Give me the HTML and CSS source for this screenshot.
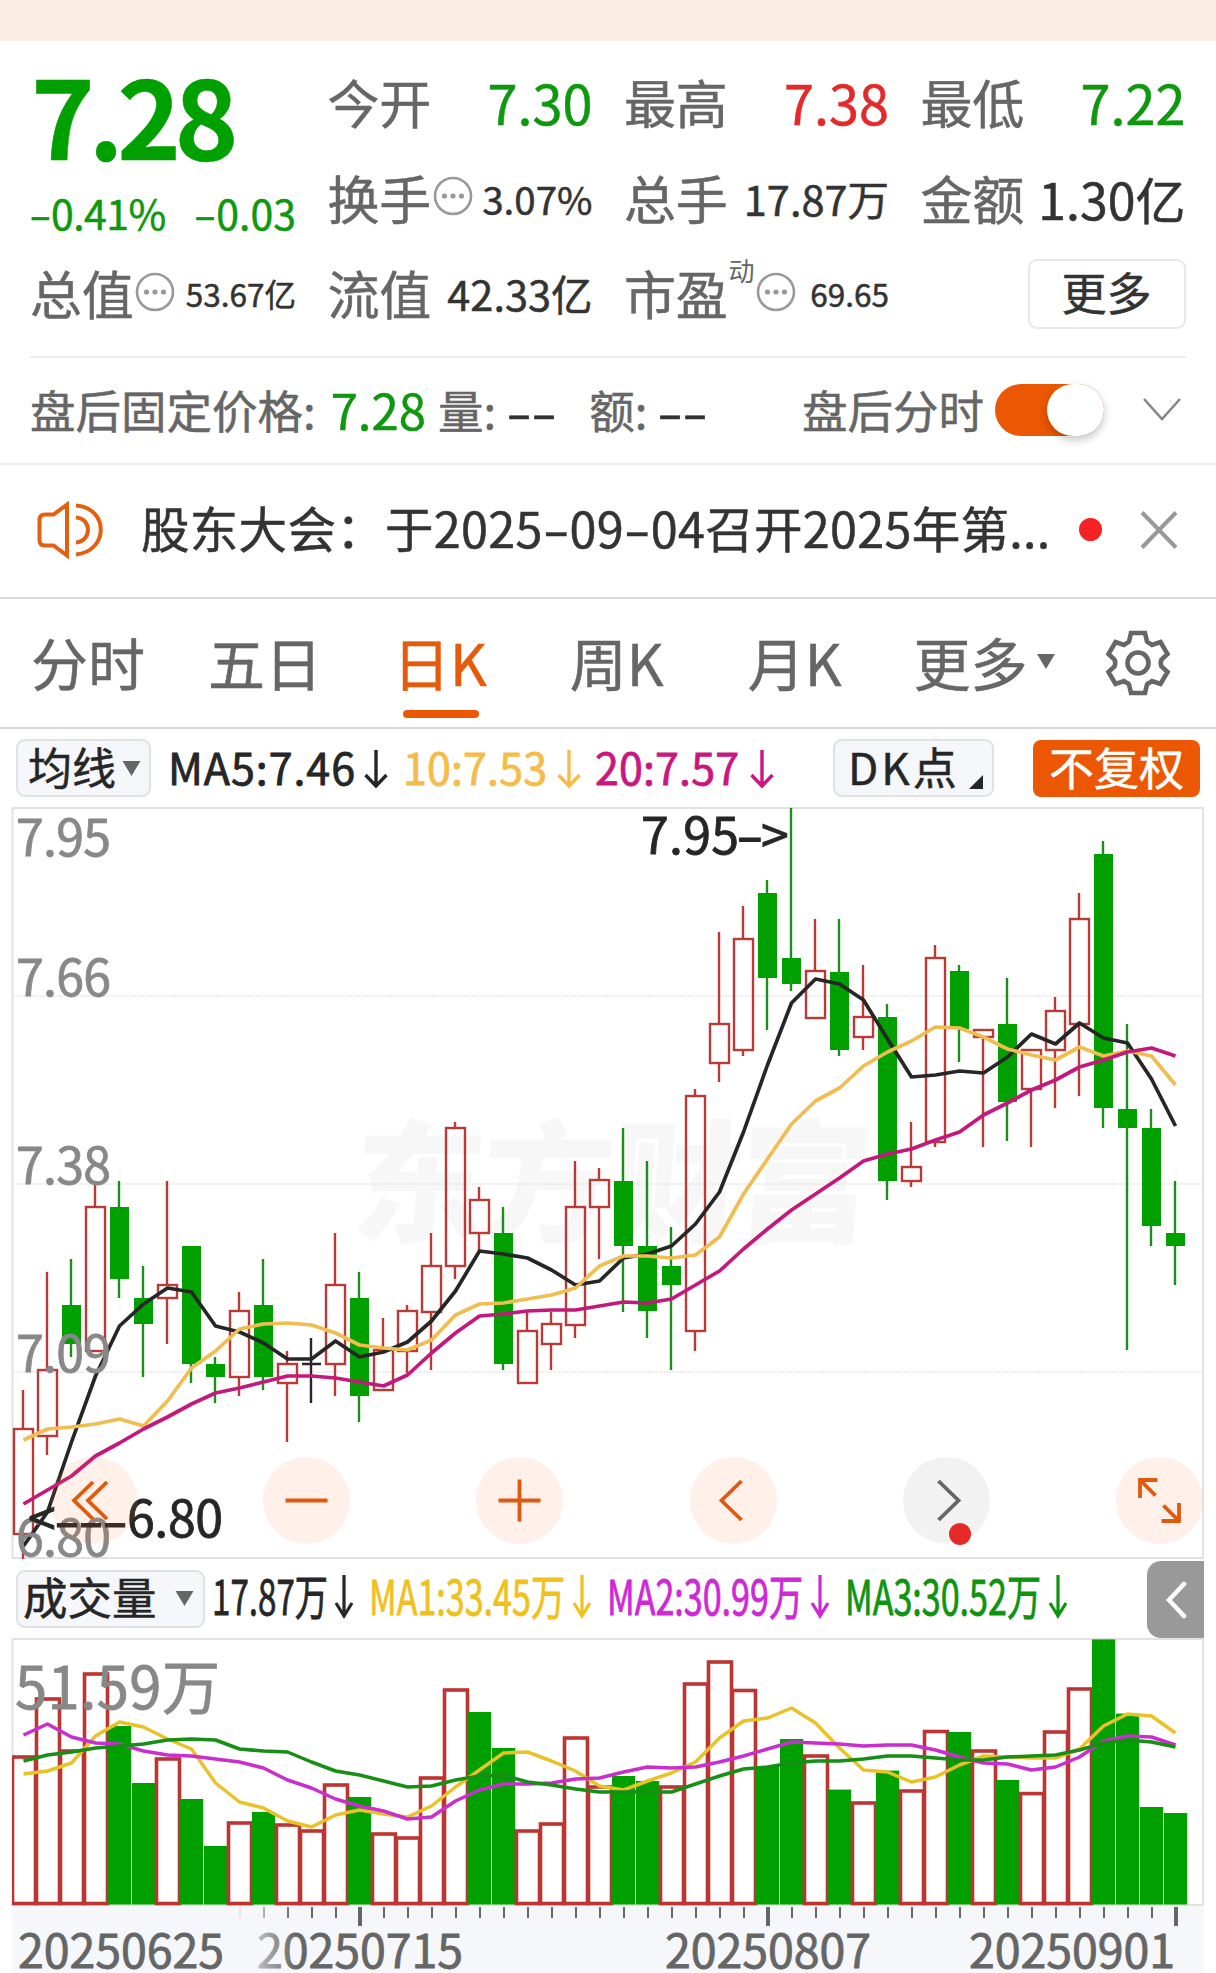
FILE: index.html
```html
<!DOCTYPE html>
<html lang="zh-CN">
<head>
<meta charset="utf-8">
<title>日K</title>
<link rel="stylesheet" href="styles.css">
</head>
<body>
<svg class="defs" width="0" height="0">
  <symbol id="dots" viewBox="0 0 40 40"><circle cx="20" cy="20" r="18" fill="none" stroke="#999" stroke-width="2.6"/><g fill="#999"><circle cx="11.5" cy="20" r="2.6"/><circle cx="20" cy="20" r="2.6"/><circle cx="28.5" cy="20" r="2.6"/></g></symbol>
  <symbol id="down" viewBox="0 0 24 40"><path d="M12 1V37M1.500 26L12 37L22.500 26" fill="none" stroke="currentColor" stroke-width="3.400"/></symbol>
</svg>
<div class="strip"></div>
<section class="quote">
  <div class="price green"><b>7.28</b><div class="chg"><span><i class="h">-</i>0.41%</span><span><i class="h">-</i>0.03</span></div></div>
  <div class="stat"><label>今开</label><span class="v54 green">7.30</span></div>
  <div class="stat"><label>最高</label><span class="v54 red">7.38</span></div>
  <div class="stat"><label>最低</label><span class="v54 green">7.22</span></div>
  <div class="stat"><label>换手</label><svg class="dots"><use href="#dots"/></svg><span class="v40">3.07%</span></div>
  <div class="stat"><label>总手</label><span class="v42">17.87万</span></div>
  <div class="stat"><label>金额</label><span class="v51">1.30亿</span></div>
  <div class="stat"><label>总值</label><svg class="dots"><use href="#dots"/></svg><span class="v32">53.67亿</span></div>
  <div class="stat"><label>流值</label><span class="v42">42.33亿</span></div>
  <div class="stat"><label>市盈</label><sup>动</sup><svg class="dots"><use href="#dots"/></svg><span class="v32">69.65</span></div>
  <div class="stat end"><button class="more">更多</button></div>
</section>
<section class="after">
  <span>盘后固定价格:</span><span class="fixed green">7.28</span><span>量:</span><span class="none"><i class="h">-</i><i class="h">-</i></span><span class="amt">额:</span><span class="none"><i class="h">-</i><i class="h">-</i></span>
  <span class="right">盘后分时</span><span class="toggle"></span>
  <svg class="chev" width="40" height="26" viewBox="0 0 40 26"><path d="M2 2L20 22L38 2" fill="none" stroke="#85878c" stroke-width="2.600"/></svg>
</section>
<section class="notice">
  <svg width="66" height="58" viewBox="0 0 66 58" fill="none" stroke="#e2600f" stroke-width="4"><path d="M30 3.500L16.500 13.500H8Q2.500 13.500 2.500 19V39Q2.500 44.500 8 44.500H16.500L30 54.500Z"/><path d="M39 4.500C72 7 72 50 39 53.500M39 16.500C55 17.500 55 40 39 41.500"/></svg>
  <p>股东大会：于2025<i class="h">-</i>09<i class="h">-</i>04召开2025年第...</p>
  <span class="dot"></span>
  <svg width="40" height="40" viewBox="0 0 40 40"><path d="M3 2.500L37 37.500M37 2.500L3 37.500" stroke="#999" stroke-width="4"/></svg>
</section>
<nav class="tabs">
  <a>分时</a><a>五日</a><a class="on">日K</a><a>周K</a><a>月K</a><a>更多<svg class="tri" width="18" height="15" viewBox="0 0 18 15"><path d="M0 0H18L9 15Z" fill="#666"/></svg></a>
  <svg class="gear" width="68" height="68" viewBox="-34 -34 68 68" fill="none" stroke="#666" stroke-width="4.600"><path d="M-7-30H7L9-21.500Q10-20 12-19.500L14-18L22.500-21L29.500-9L23.500-3.500Q22 0 23.500 3.500L29.500 9L22.500 21L14 18L12 19.500Q10 20 9 21.500L7 30H-7L-9 21.500Q-10 20-12 19.500L-14 18L-22.500 21L-29.500 9L-23.500 3.500Q-22 0-23.500-3.500L-29.500-9L-22.500-21L-14-18L-12-19.500Q-10-20-9-21.500Z"/><circle r="10.500"/></svg>
</nav>
<div class="mabar">
  <button class="pick"><span>均线</span><svg class="tri" width="19" height="15" viewBox="0 0 18 15"><path d="M0 0H18L9 15Z" fill="#666"/></svg></button>
  <svg class="legend" width="664" height="58" viewBox="169 738 664 58">
    <g font-size="43"><text x="168" y="784" fill="#262626" textLength="187">MA5:7.46</text><text x="403" y="784" fill="#f5bc4b" textLength="144">10:7.53</text><text x="595" y="784" fill="#c8187f" textLength="144">20:7.57</text></g>
    <use href="#down" x="364" y="748" width="24" height="40" color="#262626"/><use href="#down" x="557" y="748" width="24" height="40" color="#f5bc4b"/><use href="#down" x="750" y="748" width="24" height="40" color="#c8187f"/>
  </svg>
  <button class="pick dk"><span>DK点</span><svg width="14" height="14" viewBox="0 0 14 14"><path d="M14 0V14H0Z" fill="#262626"/></svg></button>
  <button class="adj"><span>不复权</span></button>
</div>
<svg id="kline" class="plot" width="1216" height="752" viewBox="0 807 1216 752"></svg>
<div class="volbar">
  <button class="pick vol"><span>成交量</span><svg class="tri" width="19" height="15" viewBox="0 0 18 15"><path d="M0 0H18L9 15Z" fill="#666"/></svg></button>
  <svg class="legend" width="942" height="60" viewBox="205 1570 942 60">
    <g font-size="48">
      <text x="212" y="1616" fill="#262626" textLength="116" lengthAdjust="spacingAndGlyphs">17.87万</text>
      <text x="369" y="1616" fill="#f0c11c" textLength="196" lengthAdjust="spacingAndGlyphs">MA1:33.45万</text>
      <text x="607" y="1616" fill="#cf28d6" textLength="196" lengthAdjust="spacingAndGlyphs">MA2:30.99万</text>
      <text x="845" y="1616" fill="#0f940f" textLength="196" lengthAdjust="spacingAndGlyphs">MA3:30.52万</text>
    </g>
    <g fill="none" stroke-width="3.200"><path d="M344 1576V1616M336 1604L344 1617L352 1604" stroke="#262626"/><path d="M582 1576V1616M574 1604L582 1617L590 1604" stroke="#f0c11c"/><path d="M820 1576V1616M812 1604L820 1617L828 1604" stroke="#cf28d6"/><path d="M1058 1576V1616M1050 1604L1058 1617L1066 1604" stroke="#0f940f"/></g>
  </svg>
  <span class="fold"><svg width="22" height="38" viewBox="0 0 22 38"><path d="M19 3L4 19L19 35" fill="none" stroke="#fff" stroke-width="4.500" stroke-linecap="round"/></svg></span>
</div>
<svg id="volume" class="plot" width="1216" height="335" viewBox="0 1638 1216 335"></svg>
<script src="chart.js"></script>
</body>
</html>
```
FILE: styles.css
```css
* { box-sizing: border-box; }
body { margin: 0; width: 1216px; height: 1973px; overflow: hidden; background: #fff; color: #333; font-family: "Noto Sans CJK SC", "Noto Sans", sans-serif; font-weight: 400; line-height: 1; -webkit-text-stroke: .5px currentColor; }
svg { display: block; flex: none; }
.defs { position: absolute; }
button { font: inherit; color: inherit; padding: 0; -webkit-text-stroke: inherit; }
button span { padding-bottom: 4px; }
text { font-family: "Noto Sans CJK SC", "Noto Sans", sans-serif; -webkit-text-stroke: 0; stroke-width: .8px; }
.legend, .plot { overflow: visible; }
.green { color: #0d980d; }
.red { color: #e32a2a; }
.h { font-style: normal; display: inline-block; transform: scaleX(1.6); margin: 0 .1em; }
.strip { height: 41px; background: #fcede3; }

.quote { height: 315px; padding: 14px 30px 0 30px; display: grid; grid-template-columns: 266px 264px 264px 264px; column-gap: 32.500px; grid-template-rows: repeat(3, 95.500px); }
.price { grid-row: span 2; display: flex; flex-direction: column; white-space: nowrap; }
.price b { font-size: 108px; font-weight: 700; color: #00a000; letter-spacing: -6.300px; line-height: 116px; margin-left: 1px; height: 129px; }
.chg { display: flex; justify-content: space-between; font-size: 41px; line-height: 56px; margin-left: -1px; }
.chg span:first-child { letter-spacing: -.5px; }
.stat { display: flex; align-items: center; white-space: nowrap; }
.stat label { font-size: 52px; color: #666; letter-spacing: -.3px; padding-bottom: 1px; margin-left: -1px; }
.stat:nth-child(8) label { margin-left: 0; }
.stat span { margin-left: auto; }
.stat .green, .stat .red { padding-bottom: 2px; }
.stat.end { justify-content: flex-end; }
.stat sup { font-size: 26px; color: #666; align-self: flex-start; margin-top: 11px; margin-left: 1px; -webkit-text-stroke: 0; }
.dots { width: 40px; height: 40px; margin: -4px 0 0 2px; }
sup + .dots { margin-left: 2px; }
.v54 { font-size: 54px; }
.v51 { font-size: 50px; }
.v42 { font-size: 41.500px; }
.v40 { font-size: 38.500px; }
.v32 { font-size: 31.500px; }
.more { width: 158px; height: 70px; border: 2px solid #e8e8e8; border-radius: 9px; background: #fff; font-size: 45px; padding-bottom: 5px; }

.after { height: 107px; margin: 0 30px; border-top: 2px solid #eee; padding-bottom: 2px; display: flex; align-items: center; font-size: 45.500px; color: #666; white-space: nowrap; }
.fixed { font-size: 49px; margin: 0 12px 0 15px; padding-bottom: 2px; }
.none { color: #333; font-size: 46px; margin-left: 10px; }
.amt { margin-left: 33px; }
.right { margin-left: auto; }
.toggle { width: 109px; height: 52px; border-radius: 26px; background: #eb5703; margin-left: 11px; display: flex; justify-content: flex-end; align-items: center; }
.toggle::after { content: ""; width: 57px; height: 52px; border-radius: 28px; background: #fff; box-shadow: 0 4px 8px rgba(0,0,0,.22); }
.chev { margin: 0 4px 0 38px; }

.notice { height: 134px; border-top: 2px solid #eee; padding: 0 0 3px 37px; display: flex; align-items: center; }
.notice p { margin: 0 0 0 38px; padding-bottom: 5px; width: 912px; flex: none; font-size: 48.500px; letter-spacing: .3px; white-space: nowrap; }
.dot { width: 23px; height: 23px; flex: none; border-radius: 50%; background: #f42222; margin: 0 37px 0 26px; }

.tabs { height: 132px; border-top: 2px solid #d8d8d8; border-bottom: 2px solid #d8d8d8; padding-left: 31px; display: flex; align-items: center; color: #666; font-size: 57px; white-space: nowrap; }
.tabs a { display: flex; align-items: center; height: 100%; padding-bottom: 4px; margin-right: 63px; }
.tabs .on { color: #e65a0c; position: relative; }
.tabs .on::after { content: ""; position: absolute; left: 10px; bottom: 9px; width: 76px; height: 8px; border-radius: 4px; background: #eb5703; }
.tabs a:nth-child(2) { margin-right: 71px; }
.tabs a:nth-child(3) { margin-right: 83px; }
.tabs a:nth-child(4) { margin-right: 84px; }
.tabs a:nth-child(5) { margin-right: 72px; }
.tabs a:nth-child(6) { margin-right: 49px; }
.tabs .tri { margin-left: 10px; }

.mabar { height: 78px; padding: 10px 16px 10px; display: flex; align-items: center; color: #262626; }
.pick { width: 135px; height: 58px; border: 2px solid #dfe1e5; border-radius: 9px; background: #f6f7fa; font-size: 44px; display: flex; align-items: center; padding-left: 10px; white-space: nowrap; }
.pick .tri { margin-left: 6px; }
.mabar .legend { margin-left: 18px; }
.pick.dk { width: 161px; padding-left: 13px; }
.dk span { letter-spacing: 3px; }
.dk svg { margin: 28px 0 0 9px; }
.adj { width: 167px; height: 57px; margin-left: 39px; border: 0; border-radius: 8px; background: #eb5703; color: #fff; font-size: 45px; padding-bottom: 4px; white-space: nowrap; }

.volbar { height: 79px; padding-left: 16px; display: flex; align-items: center; color: #262626; }
.pick.vol { width: 189px; padding-left: 5px; font-size: 44.500px; }
.vol .tri { margin-left: 18px; }
.fold { width: 57px; height: 77px; margin-top: 2px; background: #999; border-radius: 14px 0 0 14px; display: flex; align-items: center; justify-content: center; }
```
FILE: chart.js
```js
const GREEN = '#00a000', RED = '#b93a36';
const X = i => 23 + 24 * i;

// [kind, high, body top, body bottom, low, volume bar top]
const days = [
  ['r',1390,1429,1534,1560,1757],['r',1272,1370,1436,1455,1699],['g',1259,1305,1344,1357,1751],['r',1181,1207,1351,1351,1674],
  ['g',1181,1207,1279,1298,1726],['g',1266,1298,1324,1377,1783],['r',1181,1285,1298,1344,1759],['g',1246,1246,1364,1383,1799],
  ['g',1357,1364,1377,1403,1846],['r',1292,1311,1377,1396,1823],['g',1259,1305,1377,1390,1812],['r',1351,1364,1383,1442,1825],
  ['k',1338,1364,1364,1403,1831],['r',1233,1285,1364,1396,1785],['g',1272,1298,1396,1422,1797],['r',1318,1350,1390,1390,1834],
  ['r',1305,1311,1351,1373,1838],['r',1233,1266,1312,1370,1778],['r',1122,1128,1266,1279,1690],['r',1187,1200,1233,1250,1712],
  ['g',1207,1233,1364,1370,1748],['r',1312,1331,1383,1383,1831],['r',1312,1324,1344,1370,1824],['r',1161,1207,1325,1338,1738],
  ['r',1168,1180,1207,1259,1787],['g',1128,1181,1246,1312,1776],['g',1161,1246,1311,1338,1781],['g',1227,1266,1285,1370,1787],
  ['r',1089,1096,1331,1351,1684],['r',932,1024,1063,1082,1662],['r',906,939,1050,1056,1690.5],['g',880,893,978,1030,1766.5],
  ['g',808,958,984,991,1739],['r',919,971,1018,1018,1756],['g',919,972,1050,1056,1789.6],['r',965,1017,1037,1050,1803],
  ['g',1004,1017,1181,1200,1770.6],['r',1122,1167,1181,1187,1791],['r',945,958,1142,1147,1731.5],['g',965,971,1029,1062,1732],
  ['r',1030,1030,1037,1147,1751],['g',978,1024,1102,1141,1780],['r',1050,1050,1089,1147,1793.6],['r',997,1011,1050,1108,1732],
  ['r',893,919,1024,1096,1689],['g',841,854,1108,1128,1639.4],['g',1024,1109,1128,1350,1713.6],['g',1109,1128,1226,1246,1807],
  ['g',1181,1233,1246,1285,1813]
];
// Sessions whose volume bar is coloured differently from the candle
const volumeKind = { 2: 'r', 12: 'r', 19: 'g', 27: 'r' };

const ma5 = [1546,1512,1442,1376,1326,1304,1288,1292,1326,1332,1343,1359,1359,1341,1357,1352,1342,1321,1291,1251,1254,1258,1270,1285,1281,1258,1254,1246,1224,1192,1132,1065,1003,979,984,1000,1039,1077,1075,1071,1073,1057,1034,1044,1023,1038,1043,1079,1126];
const ma10 = [1440,1429,1427,1424,1419,1426,1401,1368,1351,1329,1324,1323,1325,1333,1345,1348,1350,1340,1315,1304,1303,1299,1295,1288,1266,1256,1256,1258,1255,1237,1194,1159,1124,1101,1088,1066,1052,1041,1027,1028,1037,1049,1055,1060,1047,1056,1051,1056,1085];
const ma20 = [1504,1490,1476,1456,1443,1429,1417,1404,1393,1388,1382,1376,1376,1378,1382,1386,1375,1353,1333,1316,1314,1311,1310,1310,1306,1302,1303,1299,1285,1271,1249,1229,1210,1194,1178,1161,1154,1149,1140,1132,1115,1103,1090,1080,1067,1060,1052,1048,1056];
const vol1 = [1774,1771,1763,1736,1722,1727,1739,1749,1783,1802,1808,1821,1827,1815,1810,1814,1817,1806,1787,1770,1753,1752,1761,1771,1786,1790,1781,1773,1762,1738,1721,1718,1708,1723,1748,1770,1772,1782,1777,1765,1756,1757,1758,1758,1749,1726,1714,1716,1733];
const vol2 = [1735,1724,1737,1743,1744,1751,1755,1756,1759,1762,1768,1780,1788,1799,1806,1811,1819,1817,1801,1790,1784,1784,1783,1779,1778,1772,1767,1768,1767,1762,1756,1749,1742,1743,1744,1746,1745,1745,1750,1757,1763,1764,1770,1767,1757,1741,1736,1737,1745];
const vol3 = [1761,1755,1752,1748,1746,1744,1740,1739,1740,1749,1751,1752,1762,1771,1775,1781,1787,1786,1780,1776,1775,1782,1785,1789,1792,1792,1792,1792,1784,1776,1769,1767,1763,1761,1761,1759,1756,1756,1758,1760,1760,1757,1756,1755,1750,1743,1740,1742,1747];

const line = (ys, color, w) => `<polyline points="${ys.map((y, i) => X(i) + 0.5 + ',' + y).join(' ')}" fill="none" stroke="${color}" stroke-width="${w}" stroke-linejoin="round"/>`;
const text = (x, y, size, width, color, s) => `<text x="${x}" y="${y}" font-size="${size}" textLength="${width}" fill="${color}" stroke="${color}">${s}</text>`;
const frame = (y, h) => `<rect x="12.5" y="${y}" width="1190.500" height="${h}" fill="none" stroke="#e2e2e2" stroke-width="2"/>`;

let k = `<defs><clipPath id="area"><rect x="0" y="807" width="1204" height="752"/></clipPath></defs>`;
k += `<text transform="translate(350 1232) skewX(-4)" font-size="132" font-weight="900" textLength="518" fill="#f7f7f7">东方财富</text>`;
k += frame(808, 750) + `<g clip-path="url(#area)">`;
for (const y of [996, 1184, 1372]) k += `<path d="M13 ${y}H1203" stroke="#e2e2e2" stroke-width="1.500" stroke-dasharray="1.500 1.200"/>`;
days.forEach(([t, hi, a, b, lo], i) => {
  const x = X(i), c = t === 'g' ? GREEN : t === 'r' ? RED : '#262626';
  k += `<path d="M${x} ${hi}V${a}M${x} ${b}V${lo}" stroke="${t === 'g' ? '#1a901a' : c}" stroke-width="2.400"/>`;
  if (t === 'g') k += `<rect x="${x - 9}" y="${a}" width="19" height="${b - a}" fill="${c}"/>`;
  else if (t === 'r') k += `<rect x="${x - 9}" y="${a}" width="19" height="${b - a}" fill="none" stroke="${c}" stroke-width="2.400"/>`;
  else k += `<path d="M${x - 9} ${a}H${x + 10}" stroke="${c}" stroke-width="2.500"/>`;
});
k += line(ma5, '#262626', 3.7) + line(ma10, '#f2bd50', 3.7) + line(ma20, '#c4187c', 3.7) + '</g>';
[[856, '7.95'], [996, '7.66'], [1184, '7.38'], [1372, '7.09'], [1556, '6.80']].forEach(([y, s]) => k += text(16, y, 50, 95, '#888', s));
k += text(641, 854, 50, 98, '#262626', '7.95');
k += `<text transform="translate(736 854) scale(1.6 1)" font-size="50" fill="#262626" stroke="#262626">-</text>` + text(761, 854, 50, 28, '#262626', '&gt;');
k += text(28, 1537, 50, 28, '#262626', '&lt;') + text(127, 1537, 50, 96, '#262626', '6.80');
[54, 78, 102].forEach(x => k += `<text transform="translate(${x} 1539) scale(1.5 1)" font-size="50" fill="#262626" stroke="#262626">-</text>`);

const buttons = [
  [94, 'M-1-18.500L-20 0L-1 18.500M13-18.500L-6 0L13 18.500'],
  [306.5, 'M-21 0H21'],
  [519.5, 'M-21 0H21M0-21V21'],
  [733.5, 'M8-19.500L-12 0L8 19.500'],
  [946.5, 'M-8-19.500L12 0L-8 19.500'],
  [1159.5, 'M-19.500-2.500V-20.500H-2M-19.500-20.500L-4-5M2 20.500H19.500V2.500M19.500 20.500L4 5']
];
buttons.forEach(([x, d], i) => {
  const off = i === 4;
  k += `<g transform="translate(${x} 1500.500)"><circle r="43.500" fill="${off ? 'rgba(0,0,0,.05)' : 'rgba(255,110,40,.1)'}"/><path d="${d}" fill="none" stroke="${off ? '#666' : '#e0590f'}" stroke-width="3.800"/></g>`;
});
k += `<circle cx="960" cy="1534" r="11" fill="#e62a2a"/>`;
document.getElementById('kline').innerHTML = k;

let v = `<defs><linearGradient id="fade"><stop offset="0" stop-color="#f6f7fa"/><stop offset="1" stop-color="#f6f7fa" stop-opacity="0"/></linearGradient><clipPath id="box"><rect x="12" y="1638" width="1192" height="268"/></clipPath></defs>`;
v += `<rect x="12" y="1905" width="1192" height="70" fill="#f6f7fa"/>` + frame(1639, 266) + `<g clip-path="url(#box)">`;
days.forEach((d, i) => {
  const x = X(i), top = d[5];
  v += (volumeKind[i] || d[0]) === 'g'
    ? `<rect x="${x - 11}" y="${top}" width="23.200" height="${1904.5 - top}" fill="${GREEN}"/>`
    : `<rect x="${x - 10.5}" y="${top}" width="23" height="${1903.5 - top}" fill="none" stroke="#bd3532" stroke-width="3.600"/>`;
});
v += `</g>` + line(vol1, '#eac227', 3.5) + line(vol2, '#c92fce', 3.5) + line(vol3, '#158f15', 3.5);
v += text(15, 1709, 58, 205, '#888', '51.59万');
for (let i = 9; i < 49; i++) {
  const major = i === 14 || i === 31 || i === 48;
  v += `<path d="M${X(i) + 1} 1907V${major ? 1926 : 1918}" stroke="#666" stroke-width="${major ? 4 : 2}"/>`;
}
[[18, '20250625'], [257, '20250715'], [665, '20250807'], [969, '20250901']].forEach(([x, s]) => v += text(x, 1968, 46.5, 206, '#666', s));
v += `<rect x="232" y="1907" width="64" height="66" fill="url(#fade)"/>`;
document.getElementById('volume').innerHTML = v;
document.querySelectorAll('.legend text').forEach(t => t.setAttribute('stroke', t.getAttribute('fill')));
```
